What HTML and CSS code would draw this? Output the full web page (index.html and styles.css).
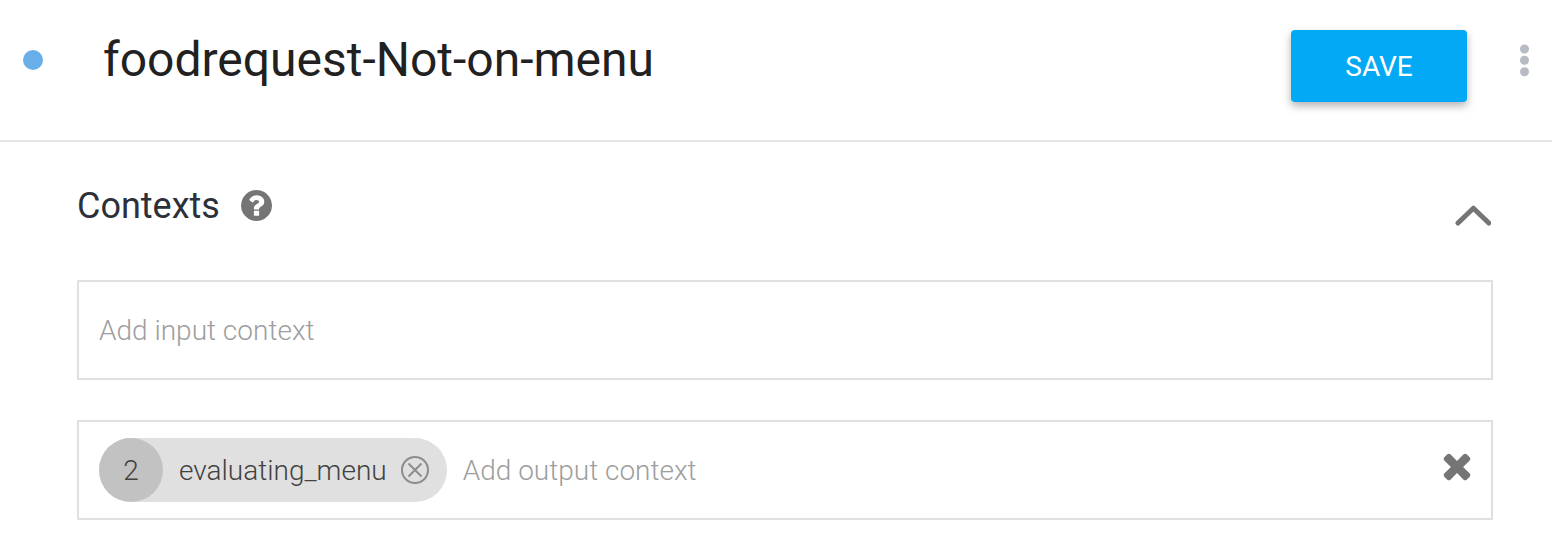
FILE: index.html
```html
<!DOCTYPE html>
<html lang="en">
<head>
    <meta charset="UTF-8">
    <meta name="viewport" content="width=device-width, initial-scale=1.0">
    <title>foodrequest-Not-on-menu</title>
    <link rel="stylesheet" href="styles.css">
</head>
<body>

<header class="header">
    <span class="status"></span>
    <h1 class="title">foodrequest-Not-on-menu</h1>
    <button type="button" class="save">SAVE</button>
    <button type="button" class="icon-button more" aria-label="More">
        <svg width="10" height="34" viewBox="0 0 10 34" fill="#b7bbc4">
            <circle cx="4.500" cy="5" r="4.500"/>
            <circle cx="4.500" cy="16.300" r="4.500"/>
            <circle cx="4.500" cy="27.700" r="4.500"/>
        </svg>
    </button>
</header>

<main class="contexts">
    <div class="section-head">
        <h2 class="section-title">Contexts</h2>
        <button type="button" class="icon-button help" aria-label="Help">
            <svg width="32" height="32" viewBox="0 0 1584 1584" fill="#757575">
                <path d="M896 1248v-192q0-14-9-23t-23-9H672q-14 0-23 9t-9 23v192q0 14 9 23t23 9h192q14 0 23-9t9-23zm256-672q0-88-55.500-163T958 297t-170-41q-243 0-371 213-15 24 8 42l132 100q7 6 19 6 16 0 25-12 53-68 86-92 34-24 86-24 48 0 85.500 26t37.500 59q0 38-20 61t-68 45q-63 28-115.500 86.500T640 892v36q0 14 9 23t23 9h192q14 0 23-9t9-23q0-19 21.500-49.500T972 829q32-18 49-28.500t46-35 44.500-48 28-60.500 12.500-81zm384 192q0 209-103 385.500T1153.500 1433 768 1536t-385.500-103T103 1153.500 0 768t103-385.500T382.500 103 768 0t385.500 103T1433 382.500 1536 768z"/>
            </svg>
        </button>
        <button type="button" class="icon-button collapse" aria-label="Collapse">
            <svg width="36" height="22" viewBox="0 0 36 22" fill="none" stroke="#757575" stroke-width="5">
                <path d="M3 18 18.400 3.200 33.800 18" stroke-linecap="round" stroke-linejoin="round"/>
            </svg>
        </button>
    </div>

    <div class="field">
        <input type="text" class="field-input" placeholder="Add input context" aria-label="Input context">
    </div>

    <div class="field">
        <div class="chip">
            <span class="lifespan">2</span>
            <span class="chip-name">evaluating_menu</span>
            <button type="button" class="icon-button" aria-label="Remove evaluating_menu">
                <svg width="30" height="30" viewBox="0 0 30 30" fill="none" stroke="#8c8c8c" stroke-width="2">
                    <circle cx="15" cy="15" r="13"/>
                    <path d="M8.500 8.500 21.500 21.500M21.500 8.500 8.500 21.500"/>
                </svg>
            </button>
        </div>
        <input type="text" class="field-input" placeholder="Add output context" aria-label="Output context">
        <button type="button" class="icon-button clear" aria-label="Clear output contexts">
            <svg width="28" height="28" viewBox="80 272 1248 1248" fill="#757575">
                <path d="M1298 1322q0 40-28 68l-136 136q-28 28-68 28t-68-28L704 1232l-294 294q-28 28-68 28t-68-28L138 1390q-28-28-28-68t28-68l294-294-294-294q-28-28-28-68t28-68l136-136q28-28 68-28t68 28l294 294 294-294q28-28 68-28t68 28l136 136q28 28 28 68t-28 68L976 960l294 294q28 28 28 68z" transform="translate(0 -64)"/>
            </svg>
        </button>
    </div>
</main>

</body>
</html>
```
FILE: styles.css
```css
* {
    box-sizing: border-box;
}
body {
    margin: 0;
    background-color: #fff;
    font-family: Roboto, "Liberation Sans", sans-serif;
}
h1, h2 {
    margin: 0;
    font-weight: 400;
}
svg {
    display: block;
}

/* Header */
.header {
    display: flex;
    align-items: flex-start;
    padding: 30px 22px 38px;
    border-bottom: 2px solid #e6e6e6;
}
.status {
    width: 20px;
    height: 20px;
    margin: 20px 60px 0 1px;
    border-radius: 50%;
    background-color: #68afea;
}
.title {
    flex: 1;
    font-size: 48px;
    line-height: 60px;
    color: #212121;
}
.save {
    width: 176px;
    height: 72px;
    border: 0;
    border-radius: 4px;
    background-color: #03a9f4;
    box-shadow: 0 4px 8px rgba(0, 0, 0, 0.3);
    color: #fff;
    font-family: inherit;
    font-size: 28px;
    cursor: pointer;
}
.icon-button {
    flex: none;
    padding: 0;
    border: 0;
    background: none;
    cursor: pointer;
}
.more {
    margin: 14px 0 0 53px;
}

/* Contexts */
.contexts {
    padding: 40px 59px 34px 77px;
}
.section-head {
    display: flex;
    align-items: center;
    height: 48px;
    margin-bottom: 50px;
}
.section-title {
    font-size: 36px;
    line-height: 48px;
    color: #2b303b;
}
.help {
    margin-left: 21px;
}
.collapse {
    margin: 20px 2px 0 auto;
}
.field {
    display: flex;
    align-items: center;
    gap: 16px;
    height: 100px;
    margin-bottom: 40px;
    padding: 0 20px;
    border: 2px solid #e0e0e0;
}
.field:last-child {
    margin-bottom: 0;
}
.field-input {
    flex: 1;
    min-width: 0;
    padding: 2px 0 0;
    border: 0;
    outline: 0;
    background: none;
    color: #424242;
    font-family: inherit;
    font-size: 28px;
    font-weight: 300;
    line-height: 36px;
}
.field-input::placeholder {
    color: #9e9e9e;
    opacity: 1;
}
.clear {
    margin-bottom: 6px;
}

/* Context chip */
.chip {
    display: flex;
    align-items: center;
    height: 64px;
    padding-right: 17px;
    border-radius: 32px;
    background-color: #e0e0e0;
    color: #424242;
    font-size: 28px;
    font-weight: 300;
}
.lifespan {
    width: 64px;
    padding-top: 2px;
    border-radius: 50%;
    background-color: #c2c2c2;
    line-height: 62px;
    text-align: center;
}
.chip-name {
    margin: 0 13px 0 16px;
}
```
